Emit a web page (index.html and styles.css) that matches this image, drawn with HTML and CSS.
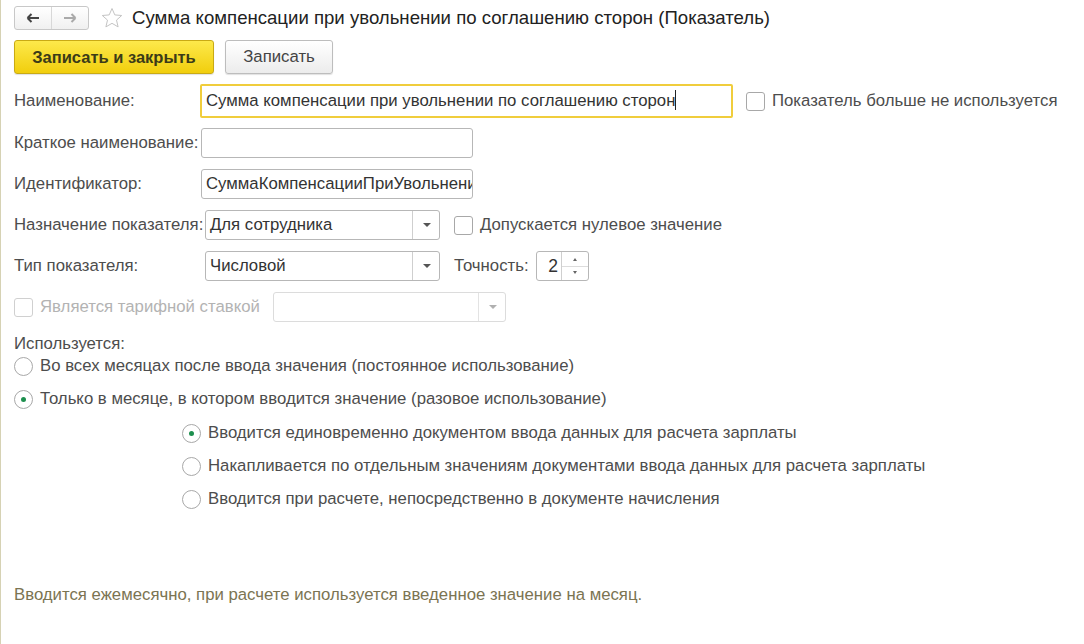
FILE: index.html
```html
<!DOCTYPE html>
<html lang="ru">
<head>
    <meta charset="UTF-8">
    <title>Сумма компенсации при увольнении по соглашению сторон (Показатель)</title>
    <link rel="stylesheet" href="styles.css">
</head>
<body>
    <div class="form">
        <div class="titlebar">
            <div class="nav-buttons">
                <span class="nav-btn">
                    <svg width="14" height="10" viewBox="0 0 14 10"><path d="M1.5 5h11.5M1.5 5l4-4M1.5 5l4 4" stroke="#444" stroke-width="2" fill="none"/></svg>
                </span>
                <span class="nav-btn">
                    <svg width="14" height="10" viewBox="0 0 14 10"><path d="M1 5h11.5M12.5 5l-4-4M12.5 5l-4 4" stroke="#aaa" stroke-width="2" fill="none"/></svg>
                </span>
            </div>
            <svg class="star" width="22" height="22" viewBox="0 0 22 22"><path d="M11 1.5l2.8 6.4 6.9.6-5.2 4.6 1.6 6.8L11 16.3l-6.1 3.6 1.6-6.8L1.3 8.5l6.9-.6z" fill="none" stroke="#c4c4c4" stroke-width="1"/></svg>
            <h1>Сумма компенсации при увольнении по соглашению сторон (Показатель)</h1>
        </div>

        <div class="toolbar">
            <button class="btn btn-primary">Записать и закрыть</button>
            <button class="btn btn-save">Записать</button>
        </div>

        <div class="row row-name">
            <label class="label">Наименование:</label>
            <div class="input input-focus">Сумма компенсации при увольнении по соглашению сторон<span class="caret"></span></div>
            <label class="check"><span class="box"></span>Показатель больше не используется</label>
        </div>

        <div class="row row-short">
            <label class="label">Краткое наименование:</label>
            <div class="input input-short"></div>
        </div>

        <div class="row row-id">
            <label class="label">Идентификатор:</label>
            <div class="input input-short">СуммаКомпенсацииПриУвольнении</div>
        </div>

        <div class="row row-purpose">
            <label class="label label-tight">Назначение показателя:</label>
            <div class="select">
                <span class="select-value">Для сотрудника</span>
                <span class="select-arrow"></span>
            </div>
            <label class="check check-zero"><span class="box"></span>Допускается нулевое значение</label>
        </div>

        <div class="row row-type">
            <label class="label label-tight">Тип показателя:</label>
            <div class="select">
                <span class="select-value">Числовой</span>
                <span class="select-arrow"></span>
            </div>
            <span class="precision-label">Точность:</span>
            <div class="spin">
                <span class="spin-value">2</span>
                <span class="spin-buttons"><i class="up"></i><i class="down"></i></span>
            </div>
        </div>

        <div class="row row-tariff">
            <label class="check disabled"><span class="box"></span>Является тарифной ставкой</label>
            <div class="select select-disabled">
                <span class="select-value"></span>
                <span class="select-arrow"></span>
            </div>
        </div>

        <div class="usage">
            <div class="usage-title">Используется:</div>
            <label class="radio"><span class="dot"></span>Во всех месяцах после ввода значения (постоянное использование)</label>
            <label class="radio checked"><span class="dot"></span>Только в месяце, в котором вводится значение (разовое использование)</label>
            <div class="sub-options">
                <label class="radio checked"><span class="dot"></span>Вводится единовременно документом ввода данных для расчета зарплаты</label>
                <label class="radio"><span class="dot"></span>Накапливается по отдельным значениям документами ввода данных для расчета зарплаты</label>
                <label class="radio"><span class="dot"></span>Вводится при расчете, непосредственно в документе начисления</label>
            </div>
        </div>

        <p class="hint">Вводится ежемесячно, при расчете используется введенное значение на месяц.</p>
    </div>
</body>
</html>
```

FILE: styles.css
```css
* {
    margin: 0;
    padding: 0;
    box-sizing: border-box;
}

body {
    font-family: 'Liberation Sans', Arial, sans-serif;
    font-size: 16.75px;
    color: #4d4d4d;
    background-color: #fff;
    width: 1084px;
    height: 644px;
    overflow: hidden;
}

.form {
    height: 644px;
    border-left: 1px solid #d6d2b4;
    padding-left: 13px;
}

.titlebar {
    display: flex;
    align-items: center;
    height: 37px;
}

.nav-buttons {
    display: flex;
    width: 75px;
    height: 24px;
    border: 1px solid #c8c8c8;
    border-radius: 3px;
    background: linear-gradient(#fff, #f0f0f0);
    margin-top: -1px;
}

.nav-btn {
    flex: 1;
    display: flex;
    align-items: center;
    justify-content: center;
}

.nav-btn + .nav-btn {
    border-left: 1px solid #d8d8d8;
}

.star {
    margin-left: 12px;
    margin-top: -1px;
}

.titlebar h1 {
    font-size: 18.6px;
    font-weight: normal;
    color: #222;
    margin-left: 9px;
    margin-top: -1px;
}

.toolbar {
    display: flex;
    gap: 11px;
    height: 34px;
    margin-top: 3px;
}

.btn {
    font-family: inherit;
    font-size: 16.75px;
    color: #444;
    height: 34px;
    border: 1px solid #bdbdbd;
    border-radius: 3px;
    background: linear-gradient(#fff, #ececec);
    box-shadow: 0 1px 1px rgba(0, 0, 0, 0.12);
}

.btn-primary {
    width: 200px;
    font-size: 16.5px;
    font-weight: bold;
    color: #3b3b18;
    border-color: #c9aa14;
    background: linear-gradient(#fde94b, #f1ce0d);
}

.btn-save {
    width: 108px;
}

.row {
    display: flex;
    align-items: center;
}

.label {
    width: 186px;
    flex-shrink: 0;
    white-space: nowrap;
}

.label-tight {
    width: 191px;
}

.row-name {
    margin-top: 10px;
    height: 34px;
}

.input {
    height: 30px;
    border: 1px solid #b7b7b7;
    border-radius: 3px;
    padding: 0 4px;
    line-height: 28px;
    color: #333;
    white-space: nowrap;
    overflow: hidden;
}

.input-focus {
    width: 533px;
    height: 34px;
    line-height: 30px;
    border: 2px solid #f0cd3c;
    border-radius: 2px;
}

.caret {
    display: inline-block;
    width: 1px;
    height: 20px;
    background: #222;
    vertical-align: -4px;
}

.input-short {
    width: 272px;
    margin-left: 1px;
}

.row-short {
    margin-top: 10px;
}

.row-id {
    margin-top: 11px;
}

.check {
    display: flex;
    align-items: center;
    color: #4d4d4d;
    white-space: nowrap;
}

.box {
    width: 19px;
    height: 19px;
    border: 1px solid #a8a8a8;
    border-radius: 3px;
    background: #fff;
    margin-right: 7px;
    flex-shrink: 0;
}

.row-name .check {
    margin-left: 13px;
}

.row-purpose {
    margin-top: 11px;
}

.select {
    display: flex;
    width: 235px;
    height: 30px;
    border: 1px solid #b7b7b7;
    border-radius: 3px;
    color: #333;
    flex-shrink: 0;
}

.select-value {
    flex: 1;
    line-height: 28px;
    padding-left: 4px;
}

.select-arrow {
    width: 27px;
    border-left: 1px solid #cfcfcf;
    position: relative;
}

.select-arrow::after {
    content: "";
    position: absolute;
    left: 10px;
    top: 12px;
    border-left: 4px solid transparent;
    border-right: 4px solid transparent;
    border-top: 4px solid #555;
}

.check-zero {
    margin-left: 14px;
}

.row-type {
    margin-top: 11px;
}

.precision-label {
    margin-left: 14px;
    width: 82px;
    flex-shrink: 0;
}

.spin {
    display: flex;
    width: 53px;
    height: 30px;
    border: 1px solid #b7b7b7;
    border-radius: 3px;
    color: #333;
}

.spin-value {
    flex: 1;
    text-align: right;
    padding-right: 3px;
    line-height: 28px;
    font-size: 17.5px;
}

.spin-buttons {
    width: 27px;
    border-left: 1px solid #cfcfcf;
    display: flex;
    flex-direction: column;
}

.spin-buttons i {
    flex: 1;
    position: relative;
}

.spin-buttons .up {
    border-bottom: 1px solid #dcdcdc;
}

.spin-buttons i::after {
    content: "";
    position: absolute;
    left: 11px;
    border-left: 2px solid transparent;
    border-right: 2px solid transparent;
}

.spin-buttons .up::after {
    top: 6px;
    border-bottom: 3px solid #666;
}

.spin-buttons .down::after {
    top: 4px;
    border-top: 3px solid #666;
}

.row-tariff {
    margin-top: 11px;
}

.check.disabled {
    color: #b3b3b3;
    width: 259px;
}

.check.disabled .box {
    border-color: #d0d0d0;
}

.select-disabled {
    width: 233px;
    border-color: #dcdcdc;
}

.select-disabled .select-arrow {
    border-left-color: #e3e3e3;
}

.select-disabled .select-arrow::after {
    border-top-color: #b0b0b0;
}

.usage {
    margin-top: 12px;
}

.usage-title {
    line-height: 19px;
}

.radio {
    display: flex;
    align-items: center;
    height: 20px;
    margin-top: 3px;
    white-space: nowrap;
}

.radio + .radio {
    margin-top: 13px;
}

.dot {
    width: 19px;
    height: 19px;
    border: 1px solid #a8a8a8;
    border-radius: 50%;
    margin-right: 7px;
    position: relative;
    background: #fff;
    flex-shrink: 0;
}

.radio.checked .dot::after {
    content: "";
    position: absolute;
    left: 6px;
    top: 6px;
    width: 5px;
    height: 5px;
    border-radius: 50%;
    background: #1d8f4e;
}

.sub-options {
    margin-left: 168px;
    margin-top: 14px;
}

.sub-options .radio:first-child {
    margin-top: 0;
}

.sub-options .radio + .radio {
    margin-top: 13px;
}

.hint {
    margin-top: 76px;
    color: #7b7452;
}
```
